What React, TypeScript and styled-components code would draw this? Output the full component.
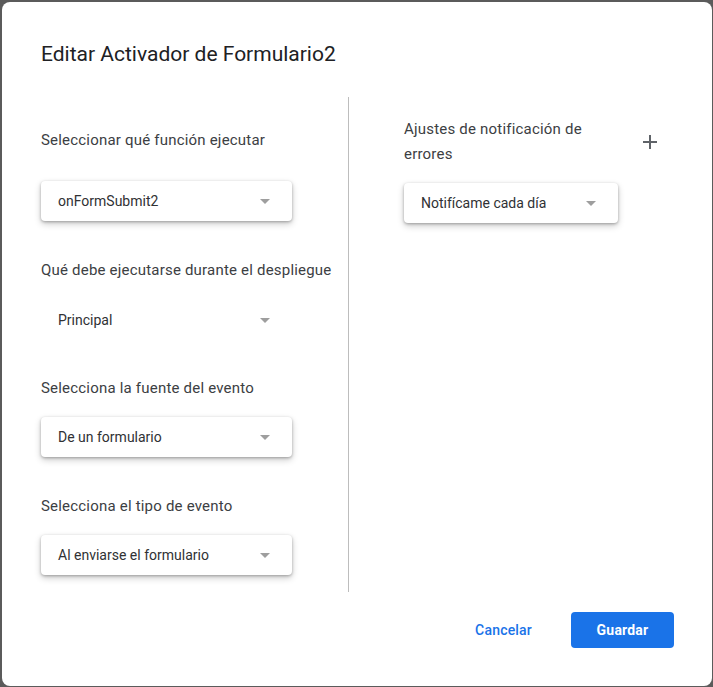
import styled, { createGlobalStyle } from 'styled-components';

const GlobalStyle = createGlobalStyle`
  html, body {
    margin: 0;
    padding: 0;
    background: #5b5b5b;
  }
  body {
    font-family: Roboto, 'Noto Sans', Arial, sans-serif;
  }
  #root {
    padding: 2px 1px 1px 2px;
  }
`;

const Dialog = styled.div`
  width: 710px;
  height: 684px;
  box-sizing: border-box;
  background: #fff;
  border-radius: 8px;
  padding: 38px 38px 38px 39px;
  display: flex;
  flex-direction: column;
`;

const Title = styled.h1`
  margin: 0;
  font-size: 21px;
  line-height: 28px;
  font-weight: 400;
  color: #202124;
`;

const Body = styled.div`
  margin-top: 29px;
  display: flex;
  height: 495px;
`;

const LeftColumn = styled.div`
  width: 308px;
  box-sizing: border-box;
  border-right: 1px solid #bdbdbd;
  padding-top: 31px;
`;

const RightColumn = styled.div`
  flex: 1;
  padding-left: 55px;
  padding-top: 20px;
`;

const Section = styled.div<{ $top: number }>`
  margin-top: ${(p) => p.$top}px;
`;

const Label = styled.div<{ $gap: number }>`
  font-size: 15px;
  line-height: 24px;
  letter-spacing: 0.2px;
  color: #3c4043;
  margin-bottom: ${(p) => p.$gap}px;
`;

const Select = styled.div<{ $flat?: boolean; $width: number }>`
  width: ${(p) => p.$width}px;
  height: 40px;
  box-sizing: border-box;
  border-radius: 4px;
  background: #fff;
  box-shadow: ${(p) => (p.$flat ? 'none' : '0 1px 3px rgba(0,0,0,0.28), 0 3px 7px rgba(0,0,0,0.2)')};
  display: flex;
  align-items: center;
  justify-content: space-between;
  padding: 0 22px 0 17px;
  font-size: 14px;
  color: #303134;
`;

const Arrow = styled.span`
  width: 0;
  height: 0;
  border-left: 5.5px solid transparent;
  border-right: 5.5px solid transparent;
  border-top: 5.5px solid #9e9e9e;
`;

const HeaderRow = styled.div`
  display: flex;
  align-items: center;
  justify-content: space-between;
  width: 254px;
  margin-bottom: 16px;
`;

const RightLabel = styled.div`
  width: 190px;
  font-size: 15px;
  line-height: 25px;
  letter-spacing: 0.2px;
  color: #3c4043;
`;

const AddButton = styled.button`
  border: 0;
  background: none;
  padding: 0;
  width: 16px;
  height: 16px;
  display: flex;
  align-items: center;
  justify-content: center;
  cursor: pointer;
`;

const Footer = styled.div`
  margin-top: 20px;
  display: flex;
  justify-content: flex-end;
  align-items: center;
  gap: 23px;
`;

const TextButton = styled.button`
  border: 0;
  background: none;
  height: 36px;
  padding: 0 16px;
  font-family: Roboto, Arial, sans-serif;
  font-size: 14px;
  font-weight: 500;
  letter-spacing: 0.2px;
  color: #1a73e8;
  cursor: pointer;
`;

const PrimaryButton = styled.button`
  border: 0;
  border-radius: 4px;
  background: #1a73e8;
  width: 103px;
  height: 36px;
  font-family: Roboto, Arial, sans-serif;
  font-size: 14px;
  font-weight: 700;
  letter-spacing: 0.2px;
  color: #fff;
  cursor: pointer;
`;

function Dropdown({ value, flat, width = 251 }: { value: string; flat?: boolean; width?: number }) {
  return (
    <Select $flat={flat} $width={width}>
      <span>{value}</span>
      <Arrow />
    </Select>
  );
}

export default function App() {
  return (
    <>
      <GlobalStyle />
      <Dialog>
        <Title>Editar Activador de Formulario2</Title>
        <Body>
          <LeftColumn>
            <Section $top={0}>
              <Label $gap={29}>Seleccionar qué función ejecutar</Label>
              <Dropdown value="onFormSubmit2" />
            </Section>
            <Section $top={37}>
              <Label $gap={18}>Qué debe ejecutarse durante el despliegue</Label>
              <Dropdown value="Principal" flat />
            </Section>
            <Section $top={36}>
              <Label $gap={17}>Selecciona la fuente del evento</Label>
              <Dropdown value="De un formulario" />
            </Section>
            <Section $top={37}>
              <Label $gap={17}>Selecciona el tipo de evento</Label>
              <Dropdown value="Al enviarse el formulario" />
            </Section>
          </LeftColumn>
          <RightColumn>
            <HeaderRow>
              <RightLabel>Ajustes de notificación de errores</RightLabel>
              <AddButton aria-label="Añadir">
                <svg width="14" height="14" viewBox="0 0 14 14">
                  <path d="M7 0v14M0 7h14" stroke="#5f6368" strokeWidth="2" />
                </svg>
              </AddButton>
            </HeaderRow>
            <Dropdown value="Notifícame cada día" width={214} />
          </RightColumn>
        </Body>
        <Footer>
          <TextButton>Cancelar</TextButton>
          <PrimaryButton>Guardar</PrimaryButton>
        </Footer>
      </Dialog>
    </>
  );
}
